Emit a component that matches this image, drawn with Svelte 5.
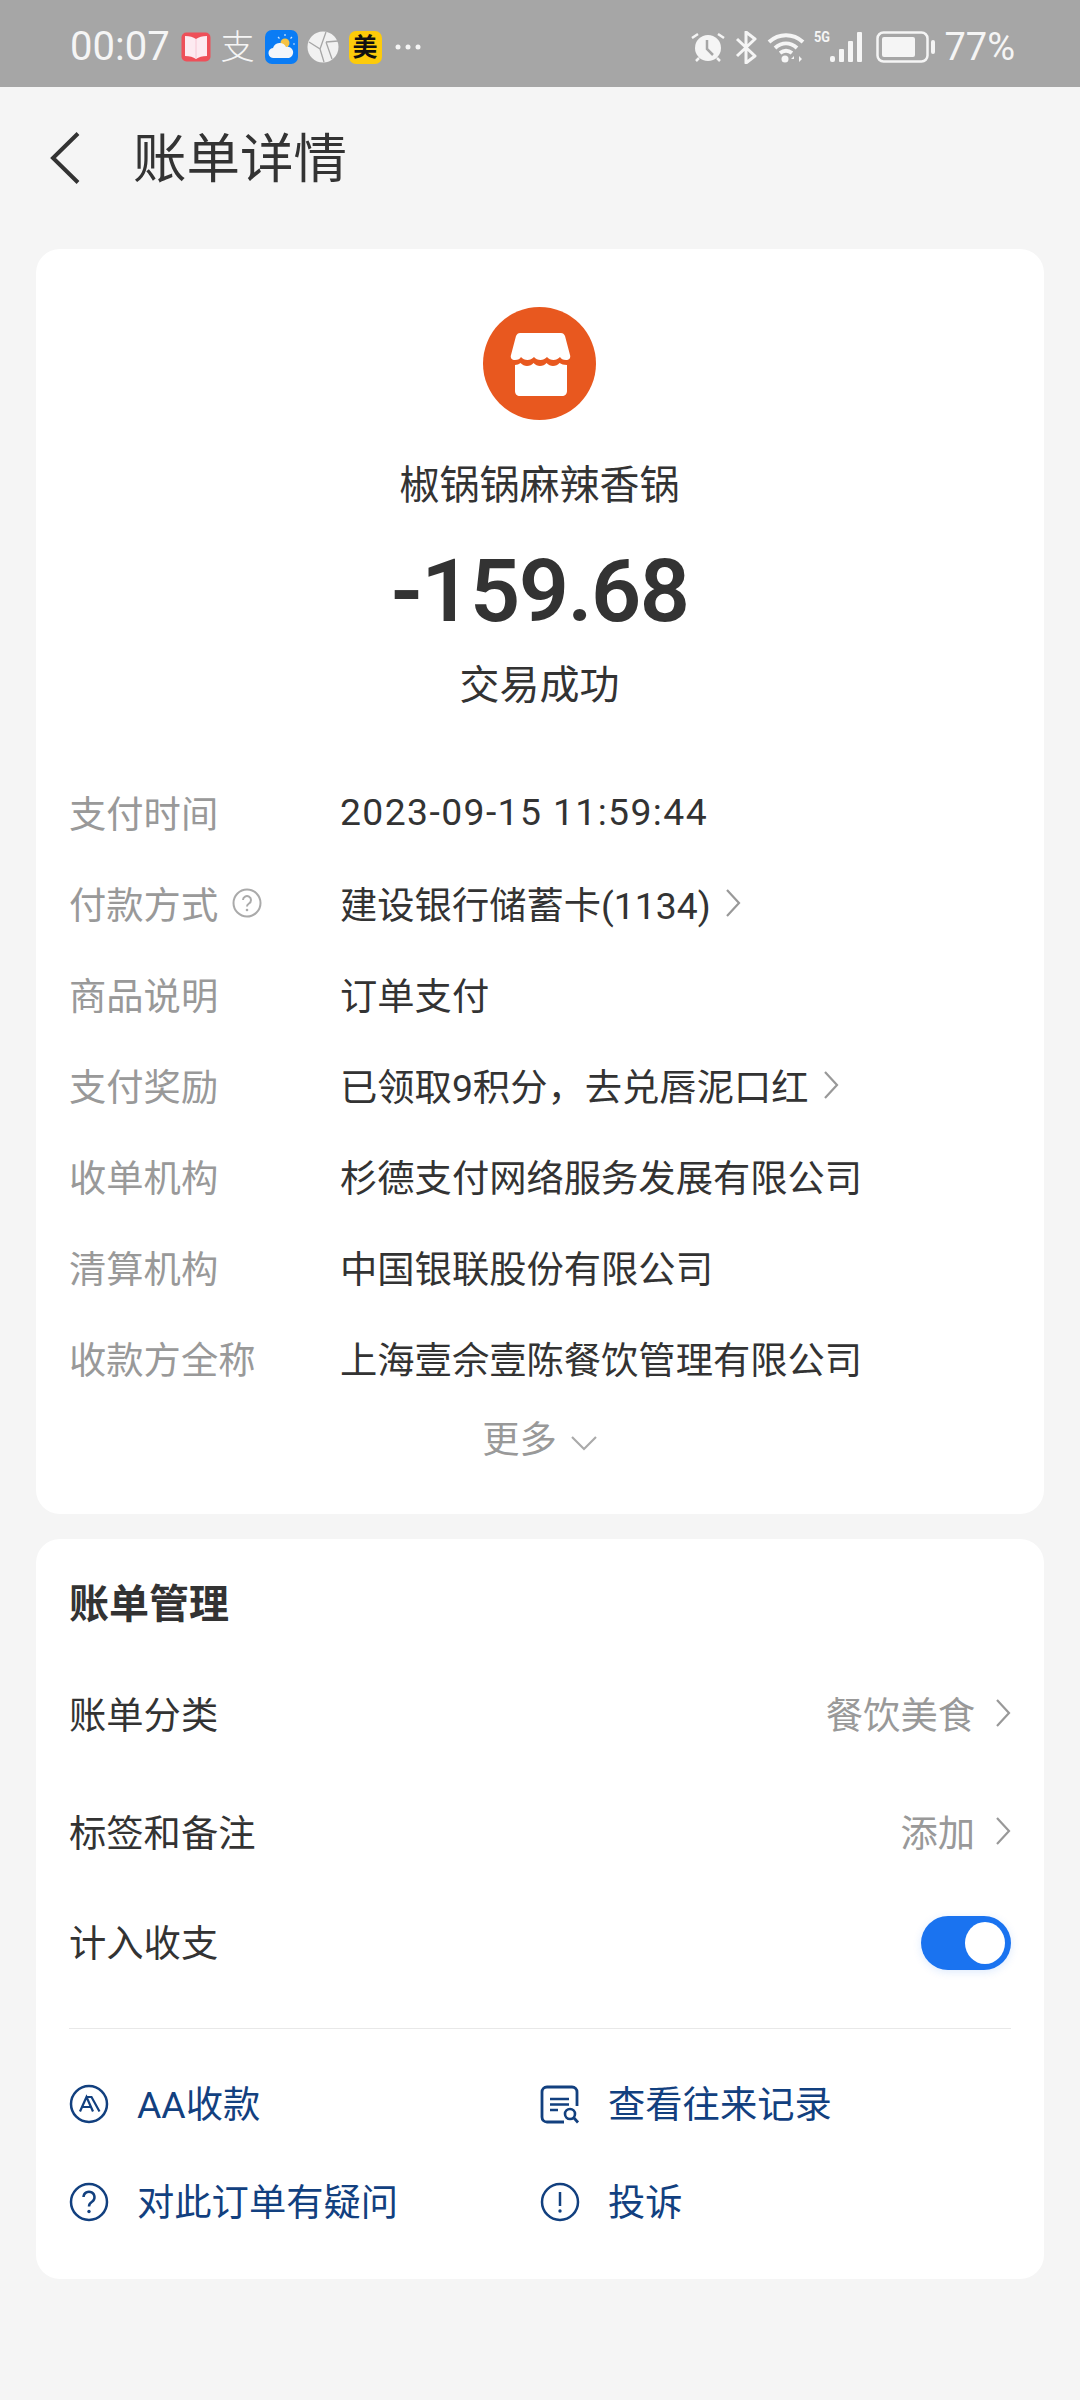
<script lang="ts">
  const rows = [
    { label: '支付时间', value: '2023-09-15 11:59:44', wide: true },
    { label: '付款方式', value: '建设银行储蓄卡(1134)', help: true, arrow: true },
    { label: '商品说明', value: '订单支付' },
    { label: '支付奖励', value: '已领取9积分，去兑唇泥口红', arrow: true },
    { label: '收单机构', value: '杉德支付网络服务发展有限公司' },
    { label: '清算机构', value: '中国银联股份有限公司' },
    { label: '收款方全称', value: '上海壹佘壹陈餐饮管理有限公司' }
  ];
</script>

<div class="page">
  <div class="status">
    <div class="status-left">
      <span class="time">00:07</span>
      <svg viewBox="0 0 30 30" width="30" height="30">
        <rect x="0.500" y="0.500" width="29" height="29" rx="5" fill="#ee4f59" />
        <path d="M4 4c5 0 8 1 11 3 3-2 6-3 11-3v20c-5 0-8 1-11 3-3-2-6-3-11-3z" fill="#fdeaf1" />
        <path d="M15 7v20" stroke="#f6c6d4" stroke-width="1" />
      </svg>
      <span class="zhi">支</span>
      <svg viewBox="0 0 33 34" width="33" height="34">
        <rect width="33" height="34" rx="7" fill="#0a7cf5" />
        <circle cx="20" cy="13" r="4.500" fill="#f6c344" />
        <path d="M20 4v2M27 7l-1.500 1.500M30 14h-2M13 7l1.500 1.500" stroke="#cfe6ff" stroke-width="1.200" />
        <path d="M9 28a5 5 0 0 1-1-10 7 7 0 0 1 13-1 5.500 5.500 0 0 1 3 11z" fill="#f3f6fa" />
      </svg>
      <svg viewBox="0 0 32 32" width="32" height="32">
        <circle cx="16" cy="16" r="15.500" fill="#f1f1f1" />
        <path d="M2 11l11 7 4 13M13 18L19 1M19 11l12-1M19 11l6 17" stroke="#a6a6a6" stroke-width="1.300" fill="none" />
      </svg>
      <span class="mei">美</span>
      <svg class="dots" viewBox="0 0 26 6" width="26" height="6">
        <circle cx="3" cy="3" r="2.500" fill="#f5f5f5" />
        <circle cx="13" cy="3" r="2.500" fill="#f5f5f5" />
        <circle cx="23" cy="3" r="2.500" fill="#f5f5f5" />
      </svg>
    </div>
    <div class="status-right">
      <svg viewBox="0 0 34 32" width="34" height="32">
        <circle cx="17" cy="17" r="13" fill="#f5f5f5" />
        <path d="M16 9v9l6 6" stroke="#a6a6a6" stroke-width="2.500" fill="none" />
        <path d="M1 7l6-4M33 7l-6-4M5 30l3-3M29 30l-3-3" stroke="#f5f5f5" stroke-width="2.500" fill="none" />
      </svg>
      <svg viewBox="0 0 22 33" width="22" height="33">
        <path d="M2 8l18 17-9 7V1l9 7L2 25" stroke="#f5f5f5" stroke-width="3" fill="none" stroke-linejoin="round" />
      </svg>
      <svg viewBox="0 0 38 32" width="38" height="32">
        <path d="M2 11c10-9 24-9 34 0M8 17c7-6 15-6 22 0M13 22c4-3 8-3 12 0" stroke="#f5f5f5" stroke-width="4" fill="none" />
        <circle cx="18" cy="28" r="3.500" fill="#f5f5f5" />
        <path d="M27 25l-3 3h3zM29 24v7M32 25l3 3-3 3z" fill="#f5f5f5" />
      </svg>
      <div class="signal">
        <span class="five">5G</span>
        <svg viewBox="0 0 33 32" width="33" height="32">
          <rect x="0" y="25" width="5" height="6" rx="2" fill="#f5f5f5" />
          <rect x="9" y="18" width="5" height="13" rx="1" fill="#f5f5f5" />
          <rect x="18" y="10" width="5" height="21" rx="1" fill="#f5f5f5" />
          <rect x="27" y="1" width="5" height="30" rx="1" fill="#f5f5f5" />
        </svg>
      </div>
      <svg class="battery" viewBox="0 0 60 32" width="60" height="32">
        <rect x="1.500" y="1.500" width="50" height="29" rx="6" fill="none" stroke="#f5f5f5" stroke-width="2.500" />
        <rect x="6" y="6" width="33" height="20" rx="2" fill="#f5f5f5" />
        <rect x="55" y="9" width="4" height="14" rx="2" fill="#f5f5f5" />
      </svg>
      <span class="pct">77%</span>
    </div>
  </div>

  <div class="nav">
    <svg viewBox="0 0 30 52" width="30" height="52">
      <path d="M28 1.500L3 26l25 24.500" stroke="#333" stroke-width="4" fill="none" />
    </svg>
    <h1>账单详情</h1>
  </div>

  <div class="card summary">
    <div class="merchant">
      <svg viewBox="0 0 113 113" width="113" height="113">
        <circle cx="56.500" cy="56.500" r="56.500" fill="#e8581f" />
        <path d="M37 26H78c2 0 3 1 4 3l5 19c1 3-1 5-4 5-3 0-5-1-6-3-2 2-4 3-6.500 3s-5-1-6.500-3c-2 2-4 3-6.500 3s-5-1-6.500-3c-2 2-4 3-6.500 3s-5-1-6.500-3c-1 2-3 3-6 3-3 0-5-2-4-5l5-19c1-2 2-3 4-3z" fill="#fff" />
        <path d="M32 58c2 0 4-1 5.500-2 2 2 4 3 6.500 3s5-1 6.500-3c2 2 4 3 6.500 3s5-1 6.500-3c2 2 4 3 6.500 3s5-1 6.500-3c2 1 4 2 7.500 2V84c0 3-2 5-5 5H37c-3 0-5-2-5-5z" fill="#fff" />
      </svg>
      <div class="name">椒锅锅麻辣香锅</div>
      <div class="amount">-159.68</div>
      <div class="state">交易成功</div>
    </div>

    <div class="rows">
      {#each rows as row}
        <div class="row">
          <div class="label">
            {row.label}
            {#if row.help}
              <svg viewBox="0 0 30 30" width="30" height="30">
                <circle cx="15" cy="15" r="13.500" fill="none" stroke="#aaa" stroke-width="2" />
                <path d="M11 12a4 4 0 1 1 6 3.500c-1.500 1-2 1.500-2 3" fill="none" stroke="#aaa" stroke-width="2" />
                <circle cx="15" cy="22" r="1.300" fill="#aaa" />
              </svg>
            {/if}
          </div>
          <div class="value" class:wide={row.wide}>
            {row.value}
            {#if row.arrow}
              <svg viewBox="0 0 16 28" width="16" height="28">
                <path d="M2 1l12 13L2 27" fill="none" stroke="#999" stroke-width="2.200" />
              </svg>
            {/if}
          </div>
        </div>
      {/each}
    </div>

    <div class="more">
      更多
      <svg viewBox="0 0 26 16" width="26" height="16">
        <path d="M1 2l12 12L25 2" fill="none" stroke="#aaa" stroke-width="2.200" />
      </svg>
    </div>
  </div>

  <div class="card manage">
    <h2>账单管理</h2>
    <div class="line first">
      <span>账单分类</span>
      <span class="side">
        餐饮美食
        <svg viewBox="0 0 16 28" width="16" height="28">
          <path d="M2 1l12 13L2 27" fill="none" stroke="#999" stroke-width="2.200" />
        </svg>
      </span>
    </div>
    <div class="line">
      <span>标签和备注</span>
      <span class="side">
        添加
        <svg viewBox="0 0 16 28" width="16" height="28">
          <path d="M2 1l12 13L2 27" fill="none" stroke="#999" stroke-width="2.200" />
        </svg>
      </span>
    </div>
    <div class="line last">
      <span>计入收支</span>
      <span class="toggle"><span class="knob"></span></span>
    </div>
    <div class="divider"></div>
    <div class="links">
      <div class="link">
        <svg viewBox="0 0 40 40" width="40" height="40">
          <circle cx="20" cy="20" r="18" fill="none" stroke="#12407f" stroke-width="2.500" />
          <path d="M11 27.500L17.500 13 24 27.500M13 23h9M17.500 13h5l8 14.500" fill="none" stroke="#12407f" stroke-width="2.200" />
        </svg>
        <span>AA收款</span>
      </div>
      <div class="link">
        <svg viewBox="0 0 40 40" width="40" height="40">
          <path d="M24 38H7c-3 0-5-2-5-5V8c0-3 2-5 5-5H32c3 0 5 2 5 5V22" fill="none" stroke="#12407f" stroke-width="2.800" />
          <path d="M10 15h19M10 20.500h19M10 26h8" stroke="#12407f" stroke-width="2.500" />
          <circle cx="30" cy="30" r="5" fill="none" stroke="#12407f" stroke-width="2.600" />
          <path d="M34 34l4 4.500" stroke="#12407f" stroke-width="2.800" />
        </svg>
        <span>查看往来记录</span>
      </div>
      <div class="link">
        <svg viewBox="0 0 40 40" width="40" height="40">
          <circle cx="20" cy="20" r="18" fill="none" stroke="#12407f" stroke-width="2.500" />
          <path d="M14.500 15a5.500 5.500 0 1 1 8.500 4.800c-2 1.300-3 2.200-3 4.700" fill="none" stroke="#12407f" stroke-width="2.500" />
          <circle cx="20" cy="29.500" r="1.700" fill="#12407f" />
        </svg>
        <span>对此订单有疑问</span>
      </div>
      <div class="link">
        <svg viewBox="0 0 40 40" width="40" height="40">
          <circle cx="20" cy="20" r="18" fill="none" stroke="#12407f" stroke-width="2.500" />
          <path d="M20 10v14" stroke="#12407f" stroke-width="2.500" />
          <circle cx="20" cy="29" r="1.700" fill="#12407f" />
        </svg>
        <span>投诉</span>
      </div>
    </div>
  </div>
</div>

<style>
  :global(body) {
    margin: 0;
    background: #f5f5f5;
  }

  .page {
    width: 1080px;
    height: 2400px;
    background: #f5f5f5;
    font-family: Roboto, "Noto Sans CJK SC", sans-serif;
    color: #333;
    overflow: hidden;
  }

  .status {
    height: 87px;
    background: #a6a6a6;
    display: flex;
    justify-content: space-between;
    align-items: center;
    padding: 0 65px 0 70px;
    color: #f5f5f5;
  }

  .status-left,
  .status-right {
    display: flex;
    align-items: center;
    padding-top: 7px;
  }

  .status-left {
    gap: 9px;
  }

  .status-right {
    gap: 10px;
  }

  .time {
    font-size: 40px;
    line-height: 44px;
    margin-right: 2px;
  }

  .zhi {
    font-size: 34px;
    line-height: 34px;
    width: 36px;
    text-align: center;
    font-weight: 300;
  }

  .mei {
    width: 33px;
    height: 33px;
    border-radius: 7px;
    background: #fdcb0a;
    color: #111;
    font-size: 25px;
    line-height: 33px;
    text-align: center;
    font-weight: 700;
    margin-left: 1px;
  }

  .dots {
    margin-left: 4px;
  }

  .signal {
    display: flex;
    align-items: flex-end;
    position: relative;
    padding-left: 6px;
    margin-left: -1px;
  }

  .five {
    position: absolute;
    left: 0;
    top: -2px;
    font-size: 15px;
    font-weight: 700;
    line-height: 16px;
    transform: scaleX(0.85);
    transform-origin: left;
  }

  .signal svg {
    margin-left: 10px;
  }

  .battery {
    margin-left: 3px;
  }

  .pct {
    font-size: 38px;
    line-height: 44px;
    margin-left: -2px;
  }

  .nav {
    height: 162px;
    display: flex;
    align-items: center;
    padding-left: 50px;
    gap: 53px;
    box-sizing: border-box;
    padding-bottom: 17px;
  }

  .nav svg {
    margin-bottom: 3px;
  }

  h1 {
    margin: 0;
    font-size: 53.500px;
    font-weight: 400;
    line-height: 60px;
  }

  .card {
    margin: 0 36px;
    background: #fff;
    border-radius: 24px;
  }

  .summary {
    height: 1265px;
    box-sizing: border-box;
    padding: 58px 34px 0 33px;
  }

  .merchant {
    display: flex;
    flex-direction: column;
    align-items: center;
  }

  .merchant svg {
    display: block;
  }

  .name {
    font-size: 40px;
    line-height: 50px;
    margin-top: 41px;
  }

  .amount {
    font-size: 88px;
    font-weight: 600;
    letter-spacing: -1.500px;
    line-height: 100px;
    margin-top: 30px;
  }

  .state {
    font-size: 40px;
    line-height: 50px;
    margin-top: 20px;
  }

  .rows {
    margin-top: 55px;
  }

  .row {
    display: grid;
    grid-template-columns: 271px 1fr;
    height: 91px;
    align-items: center;
    font-size: 37.300px;
  }

  .label {
    color: #999;
    display: flex;
    align-items: center;
    gap: 14px;
  }

  .value {
    display: flex;
    align-items: center;
    gap: 14px;
  }

  .value.wide {
    letter-spacing: 1.400px;
  }

  .more {
    display: flex;
    justify-content: center;
    align-items: center;
    gap: 14px;
    color: #999;
    font-size: 37.300px;
    line-height: 44px;
    margin-top: 15px;
  }

  .more svg {
    margin-top: 5px;
  }

  .manage {
    margin-top: 25px;
    height: 740px;
    box-sizing: border-box;
    padding: 39px 33px 0 33px;
    font-size: 37.300px;
  }

  h2 {
    margin: 0;
    font-size: 40px;
    font-weight: 700;
    line-height: 54px;
  }

  .line {
    display: flex;
    justify-content: space-between;
    align-items: center;
    height: 118px;
  }

  .line.first {
    margin-top: 22px;
  }

  .line.last {
    height: 110px;
    margin-top: -4px;
  }

  .side {
    color: #999;
    display: flex;
    align-items: center;
    gap: 20px;
  }

  .toggle {
    width: 90px;
    height: 54px;
    margin-top: 4px;
    border-radius: 27px;
    background: #1a73f0;
    display: flex;
    justify-content: flex-end;
    align-items: center;
    padding-right: 6px;
    box-sizing: border-box;
    box-shadow: 0 2px 8px rgba(26, 115, 240, 0.15);
  }

  .knob {
    width: 40px;
    height: 42px;
    border-radius: 50%;
    background: #fff;
  }

  .divider {
    height: 1px;
    background: #e8e8e8;
    margin-top: 32px;
  }

  .links {
    display: grid;
    grid-template-columns: 471px 1fr;
    margin-top: 24px;
    color: #12407f;
    font-size: 37.300px;
  }

  .link {
    display: flex;
    align-items: center;
    gap: 28px;
    height: 98px;
  }

  .link svg {
    margin-top: 4px;
  }
</style>
